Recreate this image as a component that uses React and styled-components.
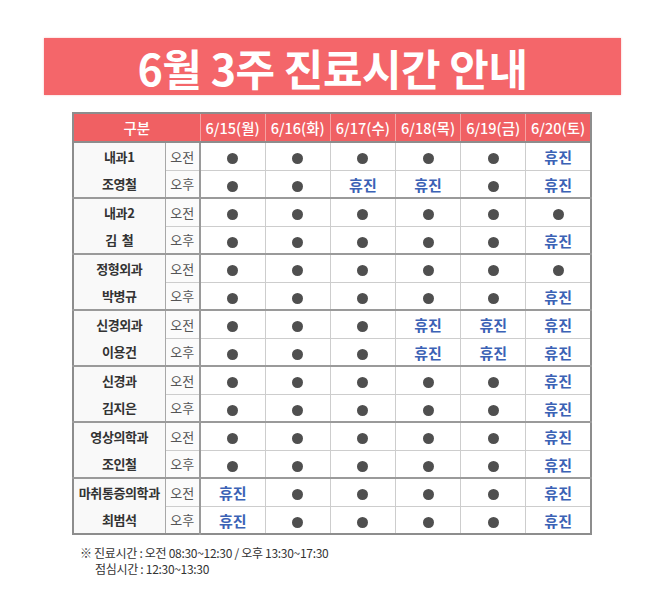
import React from 'react';
import styled, { createGlobalStyle } from 'styled-components';

const GlobalStyle = createGlobalStyle`
	body {
		margin: 0;
		background: #fff;
		font-family: 'Noto Sans CJK KR', 'Noto Sans', sans-serif;
	}
`;

const dates = [ '6/15(월)', '6/16(화)', '6/17(수)', '6/18(목)', '6/19(금)', '6/20(토)' ];

// o = 진료, x = 휴진
const groups = [
	{ dept: '내과1', doctor: '조영철', am: 'ooooox', pm: 'ooxxox' },
	{ dept: '내과2', doctor: '김  철', am: 'oooooo', pm: 'ooooox' },
	{ dept: '정형외과', doctor: '박병규', am: 'oooooo', pm: 'ooooox' },
	{ dept: '신경외과', doctor: '이용건', am: 'oooxxx', pm: 'oooxxx' },
	{ dept: '신경과', doctor: '김지은', am: 'ooooox', pm: 'ooooox' },
	{ dept: '영상의학과', doctor: '조인철', am: 'ooooox', pm: 'ooooox' },
	{ dept: '마취통증의학과', doctor: '최범석', am: 'xoooox', pm: 'xoooox' }
];

const Page = styled.div`
	width: 665px;
	padding-top: 38px;
	box-sizing: border-box;
`;

const Banner = styled.h1`
	margin: 0 44px;
	height: 57px;
	background: #f4666a;
	color: #fff;
	display: flex;
	align-items: center;
	justify-content: center;
	font-size: 43px;
	font-weight: 700;
	letter-spacing: -0.5px;
	box-shadow: 0 0 2px rgba(244, 102, 106, 0.4);
`;

const Schedule = styled.table`
	margin: 17px 0 0 72px;
	width: 520px;
	border-collapse: collapse;
	border: 2px solid #8d8d8d;
	table-layout: fixed;
`;

const HeadCell = styled.th`
	height: 27px;
	padding: 0;
	background: #f06063;
	color: #fff;
	font-size: 14.5px;
	font-weight: 500;
	border-left: 1px solid #f5a2a2;
	border-bottom: 2px solid #8d8d8d;
	&:first-child {
		border-left: none;
	}
`;

const Row = styled.tr`
	border-top: ${(p) => (p.$groupStart ? '2px solid #9a9a9a' : '1px solid #cdcdcd')};
`;

const NameCell = styled.td`
	padding: 0;
	background: #f9f9f9;
	border-right: 1px solid #a8a8a8;
	vertical-align: top;
`;

const NameLine = styled.div`
	height: 27px;
	display: flex;
	align-items: center;
	justify-content: center;
	font-size: 13px;
	font-weight: 700;
	color: #333;
	white-space: pre;
	letter-spacing: -0.4px;
`;

const PeriodCell = styled.td`
	height: 26px;
	padding: 0;
	text-align: center;
	background: #fbfbfb;
	border-right: 2px solid #9a9a9a;
	font-size: 13px;
	color: #555;
`;

const SlotCell = styled.td`
	padding: 0;
	text-align: center;
	border-left: ${(p) => (p.$first ? 'none' : '1px solid #cdcdcd')};
`;

const Dot = styled.span`
	display: inline-block;
	width: 11px;
	height: 11px;
	border-radius: 50%;
	background: #4f4f4f;
	vertical-align: middle;
`;

const Closed = styled.span`
	font-size: 15px;
	font-weight: 700;
	color: #3b62b5;
`;

const Note = styled.div`
	margin: 10px 0 0 80px;
	font-size: 12px;
	line-height: 16px;
	color: #333;
	letter-spacing: -0.3px;
`;

const NoteLine = styled.div`
	padding-left: ${(p) => (p.$indent ? '15px' : '0')};
`;

const Slot = ({ v }) => (v === 'x' ? <Closed>휴진</Closed> : <Dot />);

const Slots = ({ list }) =>
	list.split('').map((v, k) => (
		<SlotCell key={k} $first={k === 0}>
			<Slot v={v} />
		</SlotCell>
	));

const App = () => (
	<Page>
		<GlobalStyle />
		<Banner>6월 3주 진료시간 안내</Banner>
		<Schedule>
			<colgroup>
				<col style={{ width: 92 }} />
				<col style={{ width: 35 }} />
				{dates.map((d) => <col key={d} />)}
			</colgroup>
			<thead>
				<tr>
					<HeadCell colSpan={2}>구분</HeadCell>
					{dates.map((d) => <HeadCell key={d}>{d}</HeadCell>)}
				</tr>
			</thead>
			<tbody>
				{groups.map((g, i) => (
					<React.Fragment key={g.dept}>
						<Row $groupStart={i > 0}>
							<NameCell rowSpan={2}>
								<NameLine>{g.dept}</NameLine>
								<NameLine>{g.doctor}</NameLine>
							</NameCell>
							<PeriodCell>오전</PeriodCell>
							<Slots list={g.am} />
						</Row>
						<Row>
							<PeriodCell>오후</PeriodCell>
							<Slots list={g.pm} />
						</Row>
					</React.Fragment>
				))}
			</tbody>
		</Schedule>
		<Note>
			<NoteLine>※ 진료시간 : 오전 08:30~12:30 / 오후 13:30~17:30</NoteLine>
			<NoteLine $indent>점심시간 : 12:30~13:30</NoteLine>
		</Note>
	</Page>
);

export default App;
